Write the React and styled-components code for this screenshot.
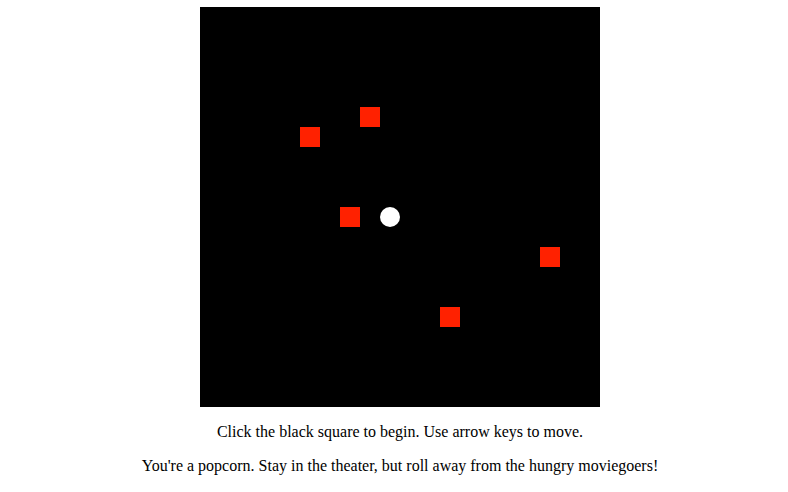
import React from "react";
import styled, { createGlobalStyle } from "styled-components";

const GlobalStyle = createGlobalStyle`
  body {
    margin: 0;
    padding-top: 7px;
    background: #fff;
    font-family: "Liberation Serif", "Times New Roman", serif;
    font-size: 16px;
    color: #000;
  }
`;

const Page = styled.div`
  display: flex;
  flex-direction: column;
  align-items: center;
  padding-left: 12px;
`;

const Theater = styled.div`
  position: relative;
  width: 400px;
  height: 400px;
  background: #000;
  cursor: pointer;
`;

const Moviegoer = styled.div`
  position: absolute;
  width: 20px;
  height: 20px;
  background: #ff2100;
`;

const Popcorn = styled.div`
  position: absolute;
  width: 20px;
  height: 20px;
  border-radius: 50%;
  background: #fff;
`;

const Hint = styled.p`
  margin: 16px 0 0;
  line-height: 18px;
  text-align: center;
`;

const moviegoers = [
  { x: 160, y: 100 },
  { x: 100, y: 120 },
  { x: 140, y: 200 },
  { x: 340, y: 240 },
  { x: 240, y: 300 },
];

const popcorn = { x: 180, y: 200 };

export default function App() {
  return (
    <Page>
      <GlobalStyle />
      <Theater>
        {moviegoers.map((m, i) => (
          <Moviegoer key={i} style={{ left: m.x, top: m.y }} />
        ))}
        <Popcorn style={{ left: popcorn.x, top: popcorn.y }} />
      </Theater>
      <Hint>Click the black square to begin. Use arrow keys to move.</Hint>
      <Hint>
        You're a popcorn. Stay in the theater, but roll away from the hungry
        moviegoers!
      </Hint>
    </Page>
  );
}
